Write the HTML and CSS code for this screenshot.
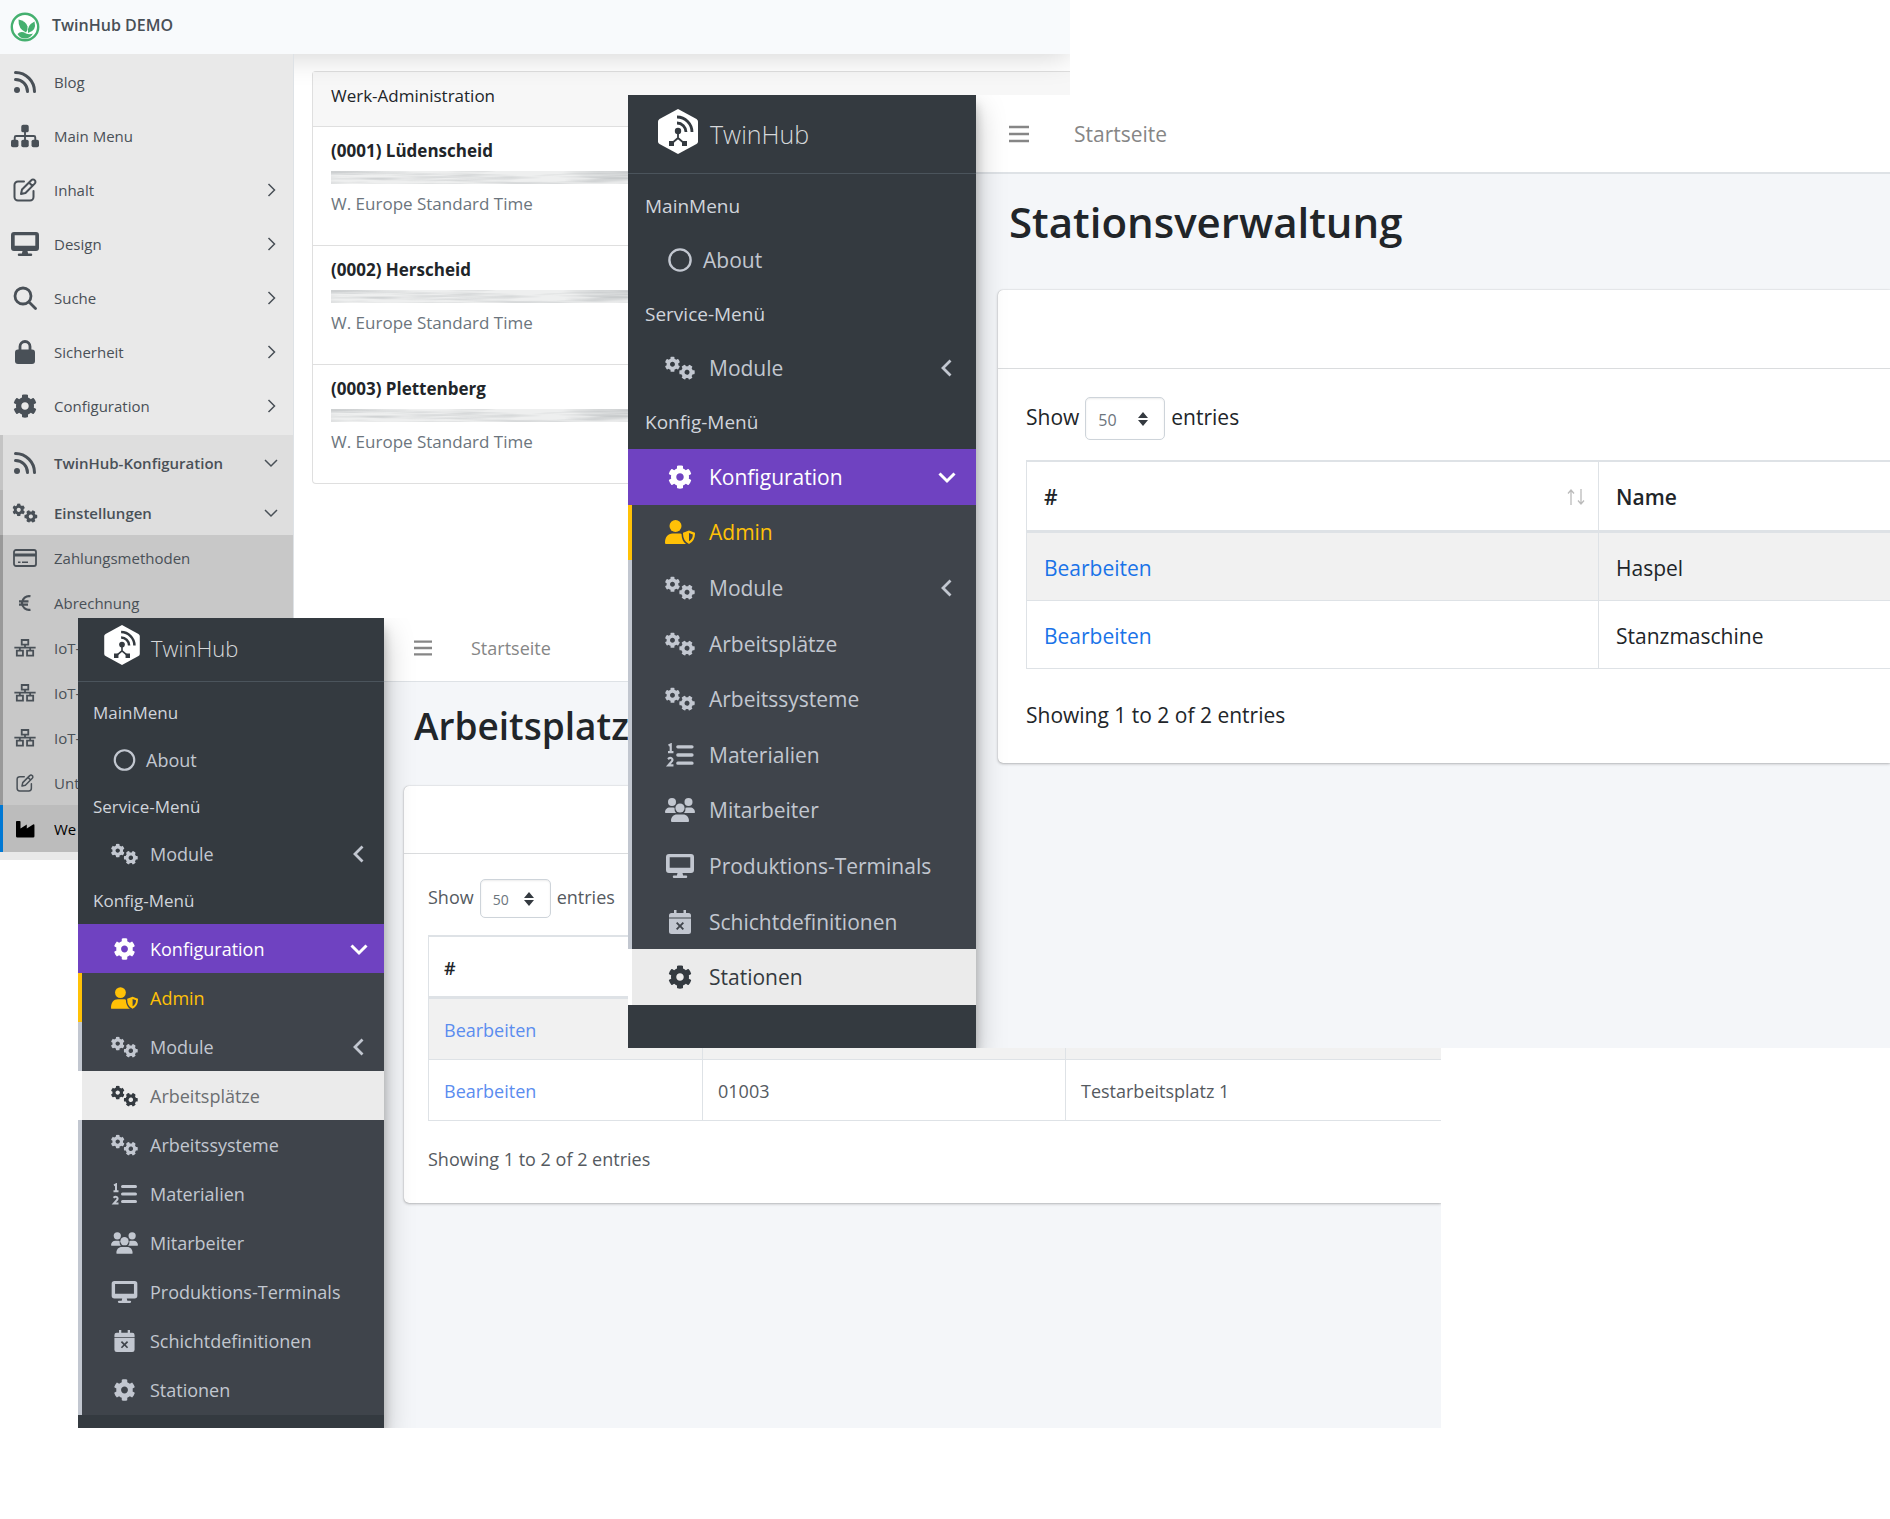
FILE: index.html
```html
<!DOCTYPE html>
<html lang="de">
<head>
<meta charset="utf-8">
<meta name="viewport" content="width=device-width, initial-scale=1">
<title>TwinHub</title>
<link rel="stylesheet" href="styles.css">
</head>
<body>
<svg class="sprite" aria-hidden="true">
  <defs>
    <filter id="smudge" x="0" y="0" width="100%" height="100%">
      <feTurbulence type="fractalNoise" baseFrequency="0.012 0.22" numOctaves="3" seed="4"/>
      <feColorMatrix type="matrix" values="0 0 0 0 .55  0 0 0 0 .57  0 0 0 0 .58  2 0 0 0 -.75"/>
    </filter>
  </defs>
  <symbol id="gear" viewBox="0 0 512 512"><path d="M487.4 315.7l-42.6-24.6c4.3-23.2 4.3-47 0-70.2l42.6-24.6c4.9-2.8 7.1-8.6 5.5-14-11.1-35.6-30-67.8-54.7-94.6-3.8-4.1-10-5.1-14.8-2.3L380.8 110c-17.9-15.4-38.5-27.3-60.8-35.1V25.8c0-5.6-3.9-10.5-9.4-11.7-36.7-8.2-74.3-7.8-109.2 0-5.5 1.2-9.4 6.1-9.4 11.7V75c-22.2 7.9-42.8 19.8-60.8 35.1L88.7 85.5c-4.9-2.8-11-1.9-14.8 2.3-24.7 26.7-43.6 58.9-54.7 94.6-1.7 5.4.6 11.2 5.5 14L67.3 221c-4.3 23.2-4.3 47 0 70.2l-42.6 24.6c-4.9 2.8-7.1 8.6-5.5 14 11.1 35.6 30 67.8 54.7 94.6 3.8 4.1 10 5.1 14.8 2.3l42.6-24.6c17.9 15.4 38.5 27.3 60.8 35.1v49.2c0 5.6 3.9 10.5 9.4 11.7 36.7 8.2 74.3 7.8 109.2 0 5.5-1.2 9.4-6.1 9.4-11.7v-49.2c22.2-7.9 42.8-19.8 60.8-35.1l42.6 24.6c4.9 2.8 11 1.9 14.8-2.3 24.7-26.7 43.6-58.9 54.7-94.6 1.5-5.5-.7-11.3-5.6-14.1zM256 336c-44.1 0-80-35.9-80-80s35.9-80 80-80 80 35.9 80 80-35.9 80-80 80z"/></symbol>
  <symbol id="gears" viewBox="0 0 640 512">
    <use href="#gear" x="-8" y="8" width="335" height="335"/>
    <g transform="rotate(30 470 345)"><use href="#gear" x="300" y="175" width="340" height="340"/></g>
  </symbol>
  <symbol id="rss" viewBox="0 0 24 24"><circle cx="4" cy="20" r="3"/><path d="M2.500 9.500A12 12 0 0 1 14.500 21.500M2.500 2.500A19 19 0 0 1 21.500 21.500" fill="none" stroke="currentColor" stroke-width="3" stroke-linecap="round"/></symbol>
  <symbol id="sitemap" viewBox="0 0 30 24"><rect x="11" y="0" width="8" height="8" rx="2"/><rect x="0" y="16" width="8" height="8" rx="2"/><rect x="11" y="16" width="8" height="8" rx="2"/><rect x="22" y="16" width="8" height="8" rx="2"/><path d="M15 6v12M4 17v-3.500q0-1.500 1.500-1.500h19q1.500 0 1.500 1.500V17" fill="none" stroke="currentColor" stroke-width="2"/></symbol>
  <symbol id="edit" viewBox="0 0 24 24"><path d="M11 3.500H5A3.500 3.500 0 0 0 1.500 7v12A3.500 3.500 0 0 0 5 22.500h12a3.500 3.500 0 0 0 3.500-3.500v-6M8 16l1-4.500L18.300 2.200a2.300 2.300 0 0 1 3.400 0 2.300 2.300 0 0 1 0 3.400L12.500 15zM16 4.500l3.500 3.500" fill="none" stroke="currentColor" stroke-width="2" stroke-linejoin="round" stroke-linecap="round"/></symbol>
  <symbol id="desktop" viewBox="0 0 28 24"><path fill-rule="evenodd" d="M3 0h22a3 3 0 0 1 3 3v13a3 3 0 0 1-3 3h-8.500l.6 2.500H20a1.200 1.200 0 0 1 0 2.500H8a1.200 1.200 0 0 1 0-2.500h2.900l.6-2.500H3a3 3 0 0 1-3-3V3a3 3 0 0 1 3-3zm.7 3.200v10.600h20.600V3.200z"/></symbol>
  <symbol id="search" viewBox="0 0 24 24"><path d="M18 10a8 8 0 1 1-16 0 8 8 0 0 1 16 0zM16 16l6.500 6.500" fill="none" stroke="currentColor" stroke-width="2.800" stroke-linecap="round"/></symbol>
  <symbol id="lock" viewBox="0 0 22 24"><rect x="1" y="9.500" width="20" height="14.500" rx="3"/><path d="M6 11V6.500a5 5 0 0 1 10 0V11" fill="none" stroke="currentColor" stroke-width="2.800"/></symbol>
  <symbol id="card" viewBox="0 0 24 18"><rect x="1" y="1" width="22" height="16" rx="2" fill="none" stroke="currentColor" stroke-width="1.800"/><path d="M1 4.500h22v3H1zM5 12.500h2.500v1.500H5zM9 12.500h6v1.500H9z"/></symbol>
  <symbol id="euro" viewBox="0 0 14 18"><path d="M12.500 2.300A7 7 0 0 0 4 9a7 7 0 0 0 8.500 6.700M1 7.300h9.500M1 10.700h9" fill="none" stroke="currentColor" stroke-width="2.200"/></symbol>
  <symbol id="network" viewBox="0 0 26 22"><path d="M9 1.200h8v5.600H9zM3 14.200h7.500v6H3zM15.500 14.200H23v6h-7.500zM13 7v3.500M0 10.500h26M6.700 10.500V14M19.300 10.500V14" fill="none" stroke="currentColor" stroke-width="2.200"/></symbol>
  <symbol id="industry" viewBox="0 0 22 20"><path d="M1 2a1 1 0 0 1 1-1h3a1 1 0 0 1 1 1v7.500l7-4.500v4.500L20 5q1.500-.7 1.500 1v12a1.500 1.500 0 0 1-1.500 1.500H2.500A1.500 1.500 0 0 1 1 18z"/></symbol>
  <symbol id="ring" viewBox="0 0 26 26"><circle cx="13" cy="13" r="11.500" fill="none" stroke="currentColor" stroke-width="2.600"/></symbol>
  <symbol id="shield" viewBox="0 0 30 24"><circle cx="10.500" cy="6" r="6"/><path d="M0 23c0-6 3-9.500 7.500-9.500h6.500c1 0 1.700.1 2.500.4.200 4.600 1.600 7.800 4.500 10.100H1a1 1 0 0 1-1-1z"/><path fill-rule="evenodd" d="M24 10.500l6 2.300q.3 8.200-6 11.200-6.300-3-6-11.200zm0 2.500v8.300q3.800-2.300 3.800-6.900z"/></symbol>
  <symbol id="list" viewBox="0 0 24 22"><path d="M10 3.500h13M10 11h13M10 18.500h13" stroke="currentColor" stroke-width="3" stroke-linecap="round"/><path d="M1.500 2.300L3.500 1.300V8M1 8.300h5M1 14.800q2-1.800 3.500-.6 1.400 1.500-.5 3.200L1.300 20.500H6" fill="none" stroke="currentColor" stroke-width="2"/></symbol>
  <symbol id="users" viewBox="0 0 30 24"><circle cx="7" cy="4" r="4"/><circle cx="23.500" cy="4" r="4"/><circle cx="15" cy="10" r="4.600"/><path d="M0 14.500C0 11.500 2 9.500 5 9.500h3q.8 0 1.500.3-.3 3 1.500 5.200H.7zM30 14.500c0-3-2-5-5-5h-3q-.8 0-1.500.3.300 3-1.500 5.200h10.300zM6 23c0-4 2.500-6.500 6-6.500h6c3.500 0 6 2.500 6 6.500a1 1 0 0 1-1 1H7a1 1 0 0 1-1-1z"/></symbol>
  <symbol id="calendar" viewBox="0 0 22 24"><path d="M5 0h2.500v3h7V0H17v3h2.500A2.500 2.500 0 0 1 22 5.500V7.500H0V5.500A2.500 2.500 0 0 1 2.500 3H5z"/><path fill-rule="evenodd" d="M0 8.500h22v13a2.500 2.500 0 0 1-2.500 2.500h-17A2.500 2.500 0 0 1 0 21.500zM8.300 12L7 13.300l2.700 2.700L7 18.700 8.300 20l2.700-2.700 2.700 2.700 1.300-1.300-2.700-2.700 2.700-2.700-1.300-1.300-2.700 2.700z"/></symbol>
  <symbol id="bars" viewBox="0 0 20 18"><path d="M0 2h20M0 9h20M0 16h20" stroke="currentColor" stroke-width="2.600"/></symbol>
  <symbol id="thin-right" viewBox="0 0 12 14"><path d="M3.500 1l6 6-6 6" fill="none" stroke="currentColor" stroke-width="1.500"/></symbol>
  <symbol id="thin-down" viewBox="0 0 14 14"><path d="M1 4l6 6 6-6" fill="none" stroke="currentColor" stroke-width="1.500"/></symbol>
  <symbol id="bold-left" viewBox="0 0 18 18"><path d="M12.500 1.500L5 9l7.500 7.500" fill="none" stroke="currentColor" stroke-width="2.800"/></symbol>
  <symbol id="bold-down" viewBox="0 0 18 18"><path d="M1.500 5.500L9 13l7.500-7.500" fill="none" stroke="currentColor" stroke-width="3"/></symbol>
  <symbol id="updown" viewBox="0 0 10 14"><path d="M5 0l5 6H0zM5 14l5-6H0z"/></symbol>
  <symbol id="sort" viewBox="0 0 20 16"><path d="M5 16V1M2 4.500L5 1l3 3.500M15 0v15M12 11.500l3 3.500 3-3.500" fill="none" stroke="currentColor" stroke-width="1.300"/></symbol>
  <symbol id="hex" viewBox="0 0 40 45"><path d="M20 0l18.500 10q1.500 1 1.500 2.500v20q0 1.500-1.500 2.500L20 45 1.500 35Q0 34 0 32.500v-20Q0 11 1.500 10z" fill="#fff"/><g fill="none" stroke="#343a40"><path d="M19 8A15 15 0 0 1 34 23M19 14a9 9 0 0 1 9 9" stroke-width="2.800"/><path d="M20 22v7l-7 6M20 29l7 6" stroke-width="1.800"/></g><g fill="#343a40"><circle cx="20" cy="22" r="3.200"/><path d="M11 32h5v5h-5zM24 32h5v5h-5z"/></g></symbol>
  <symbol id="leaf" viewBox="0 0 30 30"><circle cx="15" cy="15" r="13.200" fill="#fff" stroke="#45b06f" stroke-width="2.400"/><g fill="#45b06f"><path d="M8.500 7.500Q16 9 17.500 14.500 18 18.500 16 20.500 8 17 8.500 7.500z"/><path d="M24.500 9.500Q27 18.500 18 21q-1.500-7.500 6.500-11.500z"/><path d="M7.500 22q3.500-3.500 8.500-.5 3.500 1.500 7 0-3 5-8 5t-7.500-4.500z"/></g></symbol>
</svg>

<div class="desk">

  <section class="window site">
    <header class="site-bar">
      <svg class="site-logo"><use href="#leaf"/></svg>
      <a class="site-name" href="#">TwinHub DEMO</a>
    </header>
    <div class="site-body">
      <nav class="site-nav">
        <ul class="site-list site-list-top">
          <li><a href="#"><svg><use href="#rss"/></svg><span>Blog</span></a></li>
          <li><a href="#"><svg><use href="#sitemap"/></svg><span>Main Menu</span></a></li>
          <li><a href="#"><svg><use href="#edit"/></svg><span>Inhalt</span><svg class="more"><use href="#thin-right"/></svg></a></li>
          <li><a href="#"><svg><use href="#desktop"/></svg><span>Design</span><svg class="more"><use href="#thin-right"/></svg></a></li>
          <li><a href="#"><svg><use href="#search"/></svg><span>Suche</span><svg class="more"><use href="#thin-right"/></svg></a></li>
          <li><a href="#"><svg><use href="#lock"/></svg><span>Sicherheit</span><svg class="more"><use href="#thin-right"/></svg></a></li>
          <li><a href="#"><svg><use href="#gear"/></svg><span>Configuration</span><svg class="more"><use href="#thin-right"/></svg></a></li>
        </ul>
        <a class="site-group" href="#"><svg><use href="#rss"/></svg><span>TwinHub-Konfiguration</span><svg class="more"><use href="#thin-down"/></svg></a>
        <a class="site-group site-group-inner" href="#"><svg><use href="#gears"/></svg><span>Einstellungen</span><svg class="more"><use href="#thin-down"/></svg></a>
        <ul class="site-list site-list-sub">
          <li><a href="#"><svg><use href="#card"/></svg><span>Zahlungsmethoden</span></a></li>
          <li><a href="#"><svg><use href="#euro"/></svg><span>Abrechnung</span></a></li>
          <li><a href="#"><svg><use href="#network"/></svg><span>IoT-</span></a></li>
          <li><a href="#"><svg><use href="#network"/></svg><span>IoT-</span></a></li>
          <li><a href="#"><svg><use href="#network"/></svg><span>IoT-</span></a></li>
          <li><a href="#"><svg><use href="#edit"/></svg><span>Unt</span></a></li>
          <li class="current"><a href="#"><svg><use href="#industry"/></svg><span>We</span></a></li>
        </ul>
      </nav>
      <main class="site-main">
        <div class="plants">
          <h2 class="plants-title">Werk-Administration</h2>
          <article class="plant"><h3>(0001) Lüdenscheid</h3><svg class="smudge"><rect width="100%" height="100%" filter="url(#smudge)"/></svg><p>W. Europe Standard Time</p></article>
          <article class="plant"><h3>(0002) Herscheid</h3><svg class="smudge"><rect width="100%" height="100%" filter="url(#smudge)"/></svg><p>W. Europe Standard Time</p></article>
          <article class="plant"><h3>(0003) Plettenberg</h3><svg class="smudge"><rect width="100%" height="100%" filter="url(#smudge)"/></svg><p>W. Europe Standard Time</p></article>
        </div>
      </main>
    </div>
  </section>

  <section class="window app app-small">
    <aside class="side">
      <a class="brand" href="#"><svg><use href="#hex"/></svg><span>TwinHub</span></a>
      <div class="side-top">
        <h4>MainMenu</h4>
        <a class="item about" href="#"><svg><use href="#ring"/></svg><span>About</span></a>
        <h4>Service-Menü</h4>
        <a class="item" href="#"><svg><use href="#gears"/></svg><span>Module</span><svg class="more"><use href="#bold-left"/></svg></a>
        <h4>Konfig-Menü</h4>
      </div>
      <nav class="side-menu">
        <a class="item open" href="#"><svg><use href="#gear"/></svg><span>Konfiguration</span><svg class="more"><use href="#bold-down"/></svg></a>
        <a class="item sub admin" href="#"><svg><use href="#shield"/></svg><span>Admin</span></a>
        <a class="item sub" href="#"><svg><use href="#gears"/></svg><span>Module</span><svg class="more"><use href="#bold-left"/></svg></a>
        <a class="item sub current" href="#"><svg><use href="#gears"/></svg><span>Arbeitsplätze</span></a>
        <a class="item sub" href="#"><svg><use href="#gears"/></svg><span>Arbeitssysteme</span></a>
        <a class="item sub" href="#"><svg><use href="#list"/></svg><span>Materialien</span></a>
        <a class="item sub" href="#"><svg><use href="#users"/></svg><span>Mitarbeiter</span></a>
        <a class="item sub" href="#"><svg><use href="#desktop"/></svg><span>Produktions-Terminals</span></a>
        <a class="item sub" href="#"><svg><use href="#calendar"/></svg><span>Schichtdefinitionen</span></a>
        <a class="item sub" href="#"><svg><use href="#gear"/></svg><span>Stationen</span></a>
      </nav>
    </aside>
    <main class="content">
      <header class="topbar">
        <button class="toggle" type="button" aria-label="Menü"><svg><use href="#bars"/></svg></button>
        <a href="#">Startseite</a>
      </header>
      <h1>Arbeitsplatz</h1>
      <div class="card">
        <div class="card-head"></div>
        <div class="card-body">
          <div class="length">
            <label for="len-places">Show</label>
            <span class="select"><select id="len-places"><option>50</option></select><svg><use href="#updown"/></svg></span>
            <span>entries</span>
          </div>
          <table>
            <colgroup><col class="col-edit"><col class="col-number"><col></colgroup>
            <thead><tr><th>#</th><th></th><th></th></tr></thead>
            <tbody>
              <tr><td><a href="#">Bearbeiten</a></td><td></td><td></td></tr>
              <tr><td><a href="#">Bearbeiten</a></td><td>01003</td><td>Testarbeitsplatz 1</td></tr>
            </tbody>
          </table>
          <p class="info">Showing 1 to 2 of 2 entries</p>
        </div>
      </div>
    </main>
  </section>

  <section class="window app app-large">
    <aside class="side">
      <a class="brand" href="#"><svg><use href="#hex"/></svg><span>TwinHub</span></a>
      <div class="side-top">
        <h4>MainMenu</h4>
        <a class="item about" href="#"><svg><use href="#ring"/></svg><span>About</span></a>
        <h4>Service-Menü</h4>
        <a class="item" href="#"><svg><use href="#gears"/></svg><span>Module</span><svg class="more"><use href="#bold-left"/></svg></a>
        <h4>Konfig-Menü</h4>
      </div>
      <nav class="side-menu">
        <a class="item open" href="#"><svg><use href="#gear"/></svg><span>Konfiguration</span><svg class="more"><use href="#bold-down"/></svg></a>
        <a class="item sub admin" href="#"><svg><use href="#shield"/></svg><span>Admin</span></a>
        <a class="item sub" href="#"><svg><use href="#gears"/></svg><span>Module</span><svg class="more"><use href="#bold-left"/></svg></a>
        <a class="item sub" href="#"><svg><use href="#gears"/></svg><span>Arbeitsplätze</span></a>
        <a class="item sub" href="#"><svg><use href="#gears"/></svg><span>Arbeitssysteme</span></a>
        <a class="item sub" href="#"><svg><use href="#list"/></svg><span>Materialien</span></a>
        <a class="item sub" href="#"><svg><use href="#users"/></svg><span>Mitarbeiter</span></a>
        <a class="item sub" href="#"><svg><use href="#desktop"/></svg><span>Produktions-Terminals</span></a>
        <a class="item sub" href="#"><svg><use href="#calendar"/></svg><span>Schichtdefinitionen</span></a>
        <a class="item sub current" href="#"><svg><use href="#gear"/></svg><span>Stationen</span></a>
      </nav>
    </aside>
    <main class="content">
      <header class="topbar">
        <button class="toggle" type="button" aria-label="Menü"><svg><use href="#bars"/></svg></button>
        <a href="#">Startseite</a>
      </header>
      <h1>Stationsverwaltung</h1>
      <div class="card">
        <div class="card-head"></div>
        <div class="card-body">
          <div class="length">
            <label for="len-stations">Show</label>
            <span class="select"><select id="len-stations"><option>50</option></select><svg><use href="#updown"/></svg></span>
            <span>entries</span>
          </div>
          <table>
            <colgroup><col class="col-edit"><col></colgroup>
            <thead><tr><th><span class="sortable">#<svg><use href="#sort"/></svg></span></th><th>Name</th></tr></thead>
            <tbody>
              <tr><td><a href="#">Bearbeiten</a></td><td>Haspel</td></tr>
              <tr><td><a href="#">Bearbeiten</a></td><td>Stanzmaschine</td></tr>
            </tbody>
          </table>
          <p class="info">Showing 1 to 2 of 2 entries</p>
        </div>
      </div>
    </main>
  </section>

</div>
</body>
</html>
```
FILE: styles.css
```css
* { box-sizing: border-box; }

body {
  margin: 0;
  background: #fff;
  color: #212529;
  font-family: "Open Sans", "Noto Sans", sans-serif;
}

h1, h2, h3, h4, p, ul { margin: 0; padding: 0; font-weight: inherit; }
ul { list-style: none; }
a { color: inherit; text-decoration: none; }
svg { display: block; flex: none; fill: currentColor; }
.sprite { position: absolute; width: 0; height: 0; }

.desk { position: relative; min-height: 100vh; overflow: hidden; }
.window { position: absolute; overflow: hidden; isolation: isolate; }

/* Site administration window */
.site { top: 0; left: 0; right: 820px; font-size: 15px; }
.site-bar {
  position: relative;
  z-index: 1;
  display: flex;
  align-items: center;
  gap: 12px;
  height: 54px;
  padding: 0 10px 4px;
  background: #f8fafc;
  box-shadow: 0 2px 30px rgba(0, 0, 0, .18);
}
.site-logo { width: 30px; height: 30px; margin-top: 4px; }
.site-name { color: #495057; font-size: 16px; font-weight: 600; }
.site-body { display: flex; align-items: flex-start; }
.site-nav {
  position: relative;
  z-index: 2;
  flex: none;
  width: 294px;
  padding-bottom: 8px;
  background: #e9e9e9;
  border-right: 1px solid #dee2e6;
  color: #495057;
}
.site-nav a {
  display: flex;
  align-items: center;
  gap: 15px;
  height: 100%;
  padding: 0 15px 0 11px;
}
.site-nav svg { width: 28px; height: 24px; }
.site-nav span { flex: 1; }
.site-nav .more { width: 14px; height: 14px; }
.site-list-top { padding: 1px 0 2px; }
.site-list-top li { height: 54px; }
.site-nav .site-group {
  height: 55px;
  padding-left: 8px;
  border-left: 3px solid #c4c4c4;
  background: #dedede;
  font-weight: 600;
}
.site-nav .site-group-inner { height: 45px; border-left-color: #b4b4b4; }
.site-group-inner svg:first-child { height: 20px; }
.site-list-sub { padding-bottom: 2px; background: #c8c8c8; border-left: 3px solid #999; }
.site-list-sub li { height: 45px; }
.site-nav .site-list-sub a { padding-left: 8px; }
.site-nav .site-list-sub svg { height: 18px; }
.site-nav .site-list-sub .current {
  height: 47px;
  margin: 0 0 -2px -3px;
  border-left: 3px solid #0078d4;
  background: #bcbcbc;
  color: #000;
}

.site-main { flex: 1; min-width: 0; padding: 17px 0 0 18px; font-size: 17px; line-height: 24px; }
.plants { border: 1px solid #dfdfdf; border-right: 0; border-radius: 4px 0 0 4px; }
.plants-title { padding: 12px 18px 18px; background: #f7f7f7; font-size: 17px; }
.plant { height: 119px; padding: 12px 0 0 18px; border-top: 1px solid #dfdfdf; }
.plant h3 { font-size: 17px; font-weight: 700; }
.smudge { width: 100%; height: 13px; margin: 8px 0; background: #eeefef; }
.plant p { color: #6c757d; }

/* Application windows: one layout in two sizes */
.app-small {
  --text: 18px; --head: 17px; --name: 22px; --title: 37px; --small: 14px;
  --side: 306px; --bar: 63px; --logo-w: 36px; --logo-h: 40px; --logo-x: 26px; --logo-gap: 11px; --logo-lift: 9px;
  --row: 47px; --top-pad: 7px; --head-x: 15px; --icon: 27px; --icon-h: 22px; --icon-x: 33px; --gap: 12px; --end: 16px; --foot: 13px;
  --content-x: 30px; --burger: 18px; --nav-gap: 39px; --title-h: 104px; --title-y: 12px; --card-x: 20px; --card-head: 68px;
  --pad-x: 24px; --pad-y: 25px; --sel-w: 71px; --sel-h: 39px; --space: 6px; --below: 17px;
  --th: 64px; --td: 61px; --cell: 15px; --edit: 274px; --info: 77px; --info-end: 5px;
  top: 618px; left: 78px; right: 449px; min-height: 810px;
  --ink: #555a5f; --link: #5b8def;
}
.app-large {
  --text: 21px; --head: 19px; --name: 25px; --title: 42px; --small: 16px;
  --side: 348px; --bar: 78px; --logo-w: 40px; --logo-h: 45px; --logo-x: 30px; --logo-gap: 12px; --logo-lift: 6px;
  --row: 54px; --top-pad: 5px; --head-x: 17px; --icon: 30px; --icon-h: 24px; --icon-x: 37px; --gap: 14px; --end: 20px; --foot: 43px;
  --content-x: 33px; --burger: 20px; --nav-gap: 45px; --title-h: 116px; --title-y: 16px; --card-x: 22px; --card-head: 79px;
  --pad-x: 28px; --pad-y: 28px; --sel-w: 80px; --sel-h: 43px; --space: 6px; --below: 20px;
  --th: 73px; --td: 68px; --cell: 17px; --edit: 572px; --info: 92px; --info-end: 2px;
  top: 95px; left: 628px; right: 0; min-height: 953px;
  --ink: #212529; --link: #1a73e8;
}
.app { display: flex; background: #f4f6f9; color: var(--ink); font-size: var(--text); }

.side {
  position: relative;
  z-index: 1;
  display: flex;
  flex-direction: column;
  flex: none;
  width: var(--side);
  padding-bottom: var(--foot);
  background: #343a40;
  color: #c2c7d0;
  box-shadow: 0 14px 28px rgba(0, 0, 0, .25), 0 10px 10px rgba(0, 0, 0, .22);
}
.brand {
  display: flex;
  align-items: center;
  gap: var(--logo-gap);
  height: calc(var(--bar) + 1px);
  padding: 0 0 var(--logo-lift) var(--logo-x);
  border-bottom: 1px solid #4b545c;
  color: #d6d8da;
  font-size: var(--name);
  font-weight: 300;
}
.brand svg { width: var(--logo-w); height: var(--logo-h); }
.brand span { padding-top: 5px; }
.side-top { padding-top: var(--top-pad); }
.side-top h4 {
  height: var(--row);
  padding-left: var(--head-x);
  color: #d0d4db;
  font-size: var(--head);
  line-height: var(--row);
}
.item {
  display: flex;
  align-items: center;
  gap: var(--gap);
  padding: 0 var(--end) 0 var(--icon-x);
}
.item svg { width: var(--icon); height: var(--icon-h); }
.item span { flex: 1; }
.item .more { width: 18px; height: 18px; }
.side-top .item { height: var(--row); }
.item.about { gap: 8px; }
.side-menu { display: flex; flex-direction: column; flex: 1; }
.side-menu .item { flex: 1; }
.item.open { background: #6f42c1; color: #fff; }
.item.sub {
  padding-left: calc(var(--icon-x) - 4px);
  border-left: 4px solid #c2c7d0;
  background: #3f444b;
}
.item.admin { border-left-color: #ffc107; color: #ffc107; }
.item.current { border-left-color: #fff; background: #ebebeb; color: #343a40; }
.app-small .item.current span { color: #6c6f72; }

.content { flex: 1; min-width: 0; }
.topbar {
  display: flex;
  align-items: center;
  gap: var(--nav-gap);
  height: calc(var(--bar) + 1px);
  padding-left: var(--content-x);
  border-bottom: 2px solid #dee2e6;
  background: #fff;
  color: #868686;
}
.topbar a { font-size: calc(var(--text)); }
.app-small .topbar { padding-bottom: 3px; border-bottom-width: 1px; }
.toggle { padding: 0; border: 0; background: none; color: inherit; }
.toggle svg { width: var(--burger); height: var(--burger); }
h1 {
  height: var(--title-h);
  padding: var(--title-y) 0 0 var(--content-x);
  color: #212529;
  font-size: var(--title);
  font-weight: 600;
  line-height: 64px;
}

.card {
  margin-left: var(--card-x);
  border-radius: 5px 0 0 5px;
  background: #fff;
  box-shadow: 0 0 1px rgba(0, 0, 0, .3), 0 1px 3px rgba(0, 0, 0, .25);
}
.card-head { height: var(--card-head); border-bottom: 1px solid #dadcde; }
.card-body { padding: var(--pad-y) 0 var(--info-end) var(--pad-x); }
.length { display: flex; align-items: center; gap: var(--space); margin-bottom: var(--below); }
.length label, .length > span:last-child { padding-bottom: 4px; }
.select { position: relative; }
.select select {
  display: block;
  width: var(--sel-w);
  height: var(--sel-h);
  padding: 2px 0 0 12px;
  border: 1px solid #ced4da;
  border-radius: 5px;
  background: #fff;
  box-shadow: inset 0 1px 2px rgba(0, 0, 0, .08);
  color: #6c757d;
  font: inherit;
  font-size: var(--small);
  appearance: none;
}
.select svg {
  position: absolute;
  top: 50%;
  right: 17px;
  width: 10px;
  height: 14px;
  margin-top: -7px;
  color: #343a40;
}

table { width: 100%; border-collapse: separate; border-spacing: 0; table-layout: fixed; border-left: 1px solid #dee2e6; }
.col-edit { width: var(--edit); }
.col-number { width: 363px; }
th, td {
  height: var(--td);
  padding: 2px 12px 0 var(--cell);
  border: solid #dee2e6;
  border-width: 0 1px 1px 0;
  text-align: left;
}
th:last-child, td:last-child { border-right: 0; }
th { height: var(--th); border-top-width: 2px; border-bottom-width: 3px; font-weight: 600; color: #212529; }
tbody tr:first-child { background: #f1f1f1; }
td a { color: var(--link); }
.sortable { display: flex; align-items: center; justify-content: space-between; }
.sortable svg { width: 20px; height: 16px; color: #bbb; }
.info { height: var(--info); line-height: var(--info); }
```
